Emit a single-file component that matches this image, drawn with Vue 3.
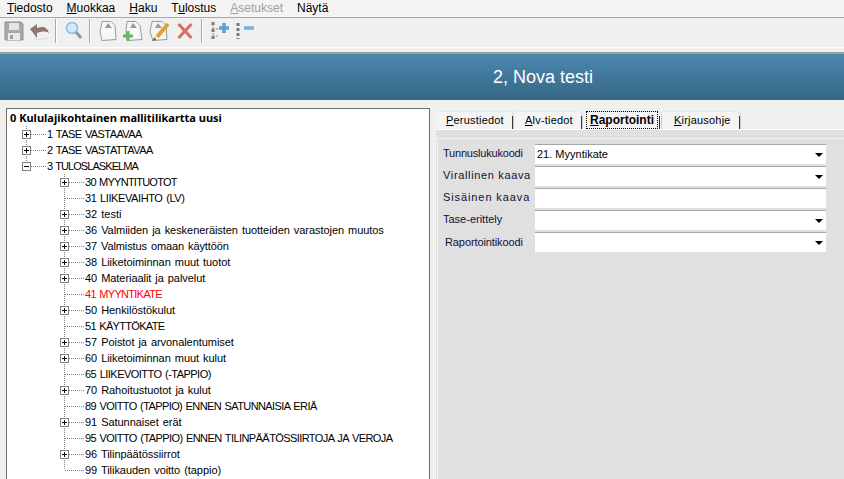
<script setup>
const menus = [
  { k: 'T', r: 'iedosto' },
  { k: 'M', r: 'uokkaa' },
  { k: 'H', r: 'aku' },
  { p: 'T', k: 'u', r: 'lostus' },
  { k: 'A', r: 'setukset', off: true },
  { r: 'Näytä' }
]
const rows = [
  { t: '1 TASE VASTAAVAA', l: 1, b: '+', ls: -0.58 },
  { t: '2 TASE VASTATTAVAA', l: 1, b: '+', ls: -0.56 },
  { t: '3 TULOSLASKELMA', l: 1, b: '-', end: true, ls: -0.92 },
  { t: '30 MYYNTITUOTOT', l: 2, b: '+', ls: -0.74 },
  { t: '31 LIIKEVAIHTO (LV)', l: 2, ls: -0.4 },
  { t: '32 testi', l: 2, b: '+' },
  { t: '36 Valmiiden ja keskeneräisten tuotteiden varastojen muutos', l: 2, b: '+', ls: -0.05 },
  { t: '37 Valmistus omaan käyttöön', l: 2, b: '+', ls: -0.1 },
  { t: '38 Liiketoiminnan muut tuotot', l: 2, b: '+', ls: -0.05 },
  { t: '40 Materiaalit ja palvelut', l: 2, b: '+', ls: -0.05 },
  { t: '41 MYYNTIKATE', l: 2, red: true, ls: -0.68 },
  { t: '50 Henkilöstökulut', l: 2, b: '+', ls: -0.05 },
  { t: '51 KÄYTTÖKATE', l: 2, ls: -0.68 },
  { t: '57 Poistot ja arvonalentumiset', l: 2, b: '+', ls: -0.05 },
  { t: '60 Liiketoiminnan muut kulut', l: 2, b: '+', ls: -0.05 },
  { t: '65 LIIKEVOITTO (-TAPPIO)', l: 2, ls: -0.53 },
  { t: '70 Rahoitustuotot ja kulut', l: 2, b: '+', ls: -0.05 },
  { t: '89 VOITTO (TAPPIO) ENNEN SATUNNAISIA ERIÄ', l: 2, ls: -0.6 },
  { t: '91 Satunnaiset erät', l: 2, b: '+', ls: -0.05 },
  { t: '95 VOITTO (TAPPIO) ENNEN TILINPÄÄTÖSSIIRTOJA JA VEROJA', l: 2, ls: -0.58 },
  { t: '96 Tilinpäätössiirrot', l: 2, b: '+', ls: -0.05 },
  { t: '99 Tilikauden voitto (tappio)', l: 2, end: true, ls: -0.05 }
]
const tabs = [
  { k: 'P', r: 'erustiedot', w: 78 },
  { k: 'A', r: 'lv-tiedot', w: 68 },
  { k: 'R', r: 'aportointi', w: 78, on: true },
  { k: 'K', r: 'irjausohje', w: 78 }
]
const fields = [
  { l: 'Tunnuslukukoodi', v: '21. Myyntikate', arrow: true, ls: -0.2 },
  { l: 'Virallinen kaava', v: '', arrow: true, ls: 0.65 },
  { l: 'Sisäinen kaava', v: '', ls: 0.9 },
  { l: 'Tase-erittely', v: '', arrow: true, ls: 0 },
  { l: 'Raportointikoodi', v: '', arrow: true, shift: true, ls: -0.1 }
]
</script>

<template>
  <div class="app">
    <nav class="menu">
      <span v-for="m in menus" :key="m.r" class="mi" :class="{ off: m.off }">{{ m.p }}<u v-if="m.k">{{ m.k }}</u>{{ m.r }}</span>
    </nav>

    <div class="toolbar">
      <svg class="ic" width="20" height="20" viewBox="0 0 20 20">
        <path d="M1 1h16l2 2v16H1z" fill="#a9a9a9" stroke="#8f8f8f"/>
        <rect x="5" y="2" width="10" height="7" fill="#e4e4e4"/>
        <rect x="4" y="12" width="12" height="7" fill="#e9e9e9"/>
        <rect x="6" y="14" width="3" height="4" fill="#a0a0a0"/>
      </svg>
      <svg class="ic undo" width="21" height="20" viewBox="0 0 21 20">
        <path d="M1 8l7-5v4c6-2 10-1 12 5-3-2-7-2-12 0v5z" fill="#8f7674"/>
        <path d="M5 18c5 1 10 0 14-1" fill="none" stroke="#d8d8d8"/>
      </svg>
      <i class="sep s1"></i>
      <svg class="ic mag" width="17" height="20" viewBox="0 0 17 20">
        <circle cx="7" cy="7" r="5.5" fill="#d4e8f8" stroke="#8fbbdc" stroke-width="1.5"/>
        <path d="M11 11l5 6" stroke="#8f9aa3" stroke-width="3"/>
      </svg>
      <i class="sep s2"></i>
      <svg class="ic doc" width="18" height="22" viewBox="0 0 18 22">
        <path d="M3 1.5h9l4 4 1 14-14 1-2-9z" fill="#f7f7f7" stroke="#999"/>
        <path d="M6 8l3-5 4 5z" fill="#999"/>
      </svg>
      <svg class="ic doc2" width="20" height="22" viewBox="0 0 20 22">
        <path d="M4 1.5h9l4 4 2 14-15 1-1-9z" fill="#f7f7f7" stroke="#999"/>
        <path d="M7 8l3-5 4 5z" fill="#999"/>
        <path d="M5 11v10M0 16h10" stroke="#66b466" stroke-width="3"/>
      </svg>
      <svg class="ic doc3" width="21" height="22" viewBox="0 0 21 22">
        <path d="M3 1.5h10l4 4 1 14-14 1-3-9z" fill="#f5f5f5" stroke="#999"/>
        <path d="M6 8l3-5 4 5z" fill="#999"/>
        <path d="M19 4l-11 13" stroke="#e2a23a" stroke-width="4"/>
        <path d="M6 17l-3 4 4-1z" fill="#6b5a3a"/>
      </svg>
      <svg class="ic del" width="16" height="18" viewBox="0 0 16 18">
        <path d="M1.5 2l13 14M14.5 2l-13 14" stroke="#d96b64" stroke-width="3"/>
      </svg>
      <i class="sep s3"></i>
      <svg class="ic t1" width="19" height="20" viewBox="0 0 19 20">
        <path d="M2 3v13M2 8h6M2 15h6" stroke="#8a8a8a" stroke-dasharray="2 1"/>
        <rect x="0.5" y="1" width="3" height="3" fill="#7d7d7d"/>
        <rect x="0.5" y="8" width="3" height="3" fill="#7d7d7d"/>
        <rect x="0.5" y="15" width="3" height="3" fill="#7d7d7d"/>
        <path d="M13 2v10M8 7h10" stroke="#5aa2d8" stroke-width="3.5"/>
      </svg>
      <svg class="ic t2" width="19" height="20" viewBox="0 0 19 20">
        <path d="M2 2v16" stroke="#777" stroke-width="3" stroke-dasharray="3 2"/>
        <path d="M8 7h10" stroke="#7aaed6" stroke-width="3.5"/>
      </svg>
    </div>

    <header class="band"><h1>2, Nova testi</h1></header>

    <main class="work">
      <section class="tree">
        <div class="root"><b>0 Kululajikohtainen mallitilikartta uusi</b></div>
        <div
          v-for="r in rows"
          :key="r.t"
          class="row"
          :class="['l' + r.l, { nobox: !r.b, end: r.end, red: r.red }]"
        >
          <span class="gutter"><span v-if="r.b" class="box" :class="{ plus: r.b === '+' }"></span></span>
          <span class="dash"></span>
          <span class="txt" :style="{ letterSpacing: (r.ls || 0) + 'px' }">{{ r.t }}</span>
        </div>
      </section>

      <section class="side">
        <div class="tabs">
          <div
            v-for="t in tabs"
            :key="t.r"
            class="tab"
            :class="{ on: t.on }"
            :style="{ width: t.w + 'px' }"
          ><span class="cap"><u>{{ t.k }}</u>{{ t.r }}</span><i class="edge"></i></div>
        </div>
        <div class="page">
          <div class="inner">
            <div v-for="f in fields" :key="f.l" class="field">
              <label :class="{ shift: f.shift }" :style="{ letterSpacing: f.ls + 'px' }">{{ f.l }}</label>
              <div class="ctl">
                <span>{{ f.v }}</span>
                <i v-if="f.arrow" class="arrow"></i>
              </div>
            </div>
          </div>
        </div>
      </section>
    </main>
  </div>
</template>

<style>
html, body { margin: 0; overflow: hidden; }
</style>

<style scoped>
.app {
  width: 844px;
  height: 479px;
  overflow: hidden;
  background: #f0f0f0;
  font-family: "Liberation Sans", Arial, sans-serif;
  font-size: 11px;
  color: #000;
  display: flex;
  flex-direction: column;
}
.menu {
  display: flex;
  align-items: center;
  gap: 14px;
  padding-left: 7px;
  padding-bottom: 2px;
  box-sizing: border-box;
  font-size: 12px;
  background: #f4f4f4;
  border-bottom: 1px solid #a9a9a9;
  flex: none;
  height: 18px;
}
.mi.off { color: #a0a0a0; }
.toolbar {
  height: 30px;
  box-sizing: border-box;
  flex: none;
  display: flex;
  align-items: center;
  padding: 0 0 3px 4px;
  background: #f0f0f0;
  border-bottom: 1px solid #fff;
}
.ic { flex: none; display: block; filter: blur(0.35px); }
.undo { margin-left: 5px; }
.sep { flex: none; width: 1px; height: 24px; background: #a8a8a8; border-right: 1px solid #fff; }
.s1 { margin-left: 5px; }
.mag { margin-left: 8px; }
.s2 { margin-left: 7px; }
.doc { margin-left: 8px; }
.doc2 { margin-left: 6px; }
.doc3 { margin-left: 6px; }
.del { margin-left: 7px; }
.s3 { margin-left: 8px; }
.t1 { margin-left: 8px; }
.t2 { margin-left: 6px; }
.band {
  margin-top: 4px;
  border-top: 2px solid #a0a0a0;
  height: 46px;
  flex: none;
  background: linear-gradient(#4b88b0, #366785);
  display: flex;
  align-items: center;
  justify-content: center;
  padding-left: 242px;
}
.band h1 {
  margin: 0;
  color: #fff;
  font-weight: 400;
  font-size: 18px;
  line-height: 1;
}
.work {
  flex: 1;
  min-height: 0;
  display: flex;
  padding: 8px 0 0 6px;
  gap: 5px;
}
.tree {
  width: 424px;
  flex: none;
  background: #fff;
  border: 1px solid #6e6e6e;
  border-bottom: none;
  padding: 1px 0 0 2px;
  box-sizing: border-box;
  overflow: hidden;
}
.root { height: 16px; line-height: 16px; padding-left: 1px; font-family: "Noto Sans", sans-serif; }
.row { height: 16px; display: flex; align-items: center; white-space: nowrap; }
.row.l1 { padding-left: 13px; }
.row.l2 { padding-left: 51px; }
.row.red .txt { color: #ff0000; }
.gutter {
  flex: none;
  width: 9px;
  height: 16px;
  display: flex;
  align-items: center;
  background: repeating-linear-gradient(to bottom, #808080 0 1px, transparent 1px 2px) center top / 1px 100% no-repeat;
}
.end .gutter { background-size: 1px 50%; }
.box {
  width: 9px;
  height: 9px;
  box-sizing: border-box;
  border: 1px solid #808080;
  background:
    linear-gradient(#000, #000) center / 5px 1px no-repeat,
    #fff;
}
.box.plus {
  background:
    linear-gradient(#000, #000) center / 5px 1px no-repeat,
    linear-gradient(#000, #000) center / 1px 5px no-repeat,
    #fff;
}
.dash {
  flex: none;
  width: 15px;
  height: 1px;
  background: repeating-linear-gradient(to right, #808080 0 1px, transparent 1px 2px);
}
.nobox .dash { margin-left: -4px; width: 19px; }
.txt { margin-left: 1px; word-spacing: 1px; }
.side { flex: 1; min-width: 0; display: flex; flex-direction: column; }
.tabs { height: 21px; display: flex; gap: 1px; padding-left: 1px; align-items: flex-end; flex: none; }
.tab {
  height: 18px;
  box-sizing: border-box;
  border-right: 1px solid #cfcfcf;
  border-top: 1px solid #e6e6e6;
  border-top-right-radius: 5px;
  display: flex;
  align-items: center;
  padding: 0 0 2px 10px;
  flex: none;
  background: #f4f4f4;
  font-size: 11px;
  letter-spacing: 0.2px;
}
.tab .cap { flex: 1; }
.edge { flex: none; width: 1px; height: 13px; background: #333; align-self: flex-end; margin-bottom: -2px; }
.tab.on { padding-left: 4px; padding-right: 1px; font-weight: 700; font-size: 12px; letter-spacing: 0; }
.tab.on .cap { outline: 1px dotted #000; outline-offset: 1px; padding-left: 2px; margin-right: 3px; }
.tab:last-child { padding-left: 11px; }
.page {
  flex: 1;
  background: #e0e0e0;
  border-top: 1px solid #fff;
  border-left: 1px solid #f4f4f4;
  padding: 8px 0 0 1px;
}
.inner { padding: 5px 18px 0 5px; border-left: 1px solid #f2f2f2; border-top: 1px solid #f2f2f2; height: 100%; box-sizing: border-box; }
.field { display: flex; align-items: center; height: 20px; margin-bottom: 2px; }
.field label { width: 92px; flex: none; color: #10103a; padding-bottom: 3px; }
.field label.shift { padding-left: 2px; width: 90px; padding-bottom: 0; }
.ctl {
  flex: 1;
  height: 20px;
  box-sizing: border-box;
  background: #fff;
  border-top: 1px solid #a8a8a8;
  padding-left: 2px;
  display: flex;
  align-items: center;
  justify-content: space-between;
  line-height: 1;
}
.arrow {
  width: 0;
  height: 0;
  margin-right: 3px;
  border-left: 4px solid transparent;
  border-right: 4px solid transparent;
  border-top: 4px solid #000;
}
</style>
